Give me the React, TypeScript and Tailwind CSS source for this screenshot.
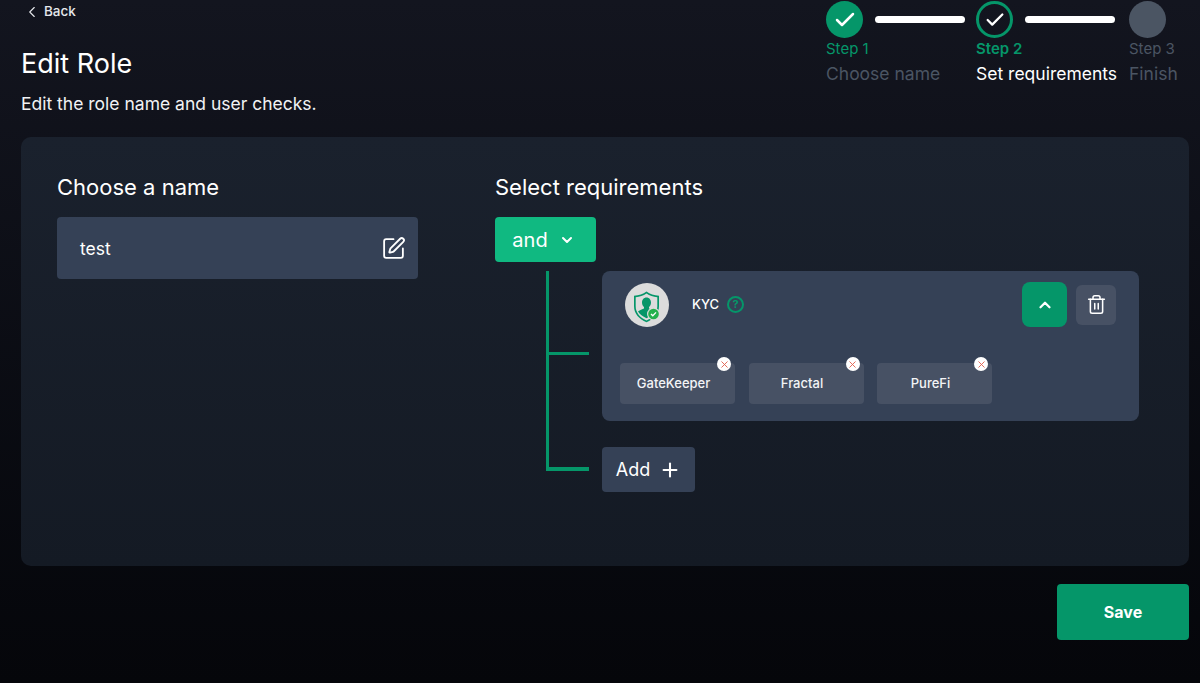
import React from 'react';
import { ChevronDown, ChevronLeft, ChevronUp, Check, Plus, SquarePen, Trash2, X } from 'lucide-react';

const steps = [
  { label: 'Step 1', name: 'Choose name', state: 'done', width: 'w-[150px]' },
  { label: 'Step 2', name: 'Set requirements', state: 'current', width: 'w-[153px]' },
  { label: 'Step 3', name: 'Finish', state: 'todo', width: 'w-[60px]' },
];

const providers = ['GateKeeper', 'Fractal', 'PureFi'];

const ShieldLogo = () => (
  <svg viewBox="0 0 44 44" className="h-[44px] w-[44px]">
    <circle cx="22" cy="22" r="22" fill="#dcdcdc" />
    <g transform="translate(-0.500 2)">
      <path d="M22 6.500c3.500 2.600 7.500 3.900 12.500 4.200v10.500c0 7.600-5.300 12.800-12.500 16-7.200-3.200-12.500-8.400-12.500-16V10.700c5-.3 9-1.600 12.500-4.200z" fill="#059669" />
      <path d="M22 8.500c3.200 2.200 6.700 3.300 10.800 3.700v9c0 6.600-4.300 11.200-10.800 14.200-6.500-3-10.800-7.600-10.800-14.200v-9c4.100-.4 7.600-1.500 10.800-3.700z" fill="#dcdcdc" />
      <path d="M22 12.500c2.700 0 4.500 2.200 4.500 5 0 2-.9 3.600-2 4.500v1.500c2.500.9 4.800 1.800 6 3-1.700 2.800-4.700 5-8.500 6.800-3.800-1.800-6.800-4-8.500-6.800 1.200-1.200 3.500-2.100 6-3V22c-1.100-.9-2-2.500-2-4.500 0-2.800 1.800-5 4.500-5z" fill="#059669" />
    </g>
    <circle cx="28.500" cy="31" r="6.500" fill="#dcdcdc" />
    <circle cx="28.500" cy="31" r="5.300" fill="#22b14c" />
    <path d="M26 31l1.800 1.800 3.200-3.400" fill="none" stroke="#fff" strokeWidth="1.300" />
  </svg>
);

const App = () => {
  return (
    <div className="flex h-[683px] w-[1200px] flex-col overflow-hidden bg-gradient-to-b from-[#13151f] to-[#05060a] font-['Inter','Noto_Sans',sans-serif] text-white">
      <header className="flex h-[137px] justify-between">
        <div className="pl-[21px]">
          <div className="flex h-[23px] items-center pl-[2px] text-[13.500px] font-medium text-[#e5e7eb]">
            <ChevronLeft className="mr-[3px] h-[18px] w-[18px]" strokeWidth={1.500} />
            Back
          </div>
          <h1 className="mt-[23px] text-[27px] leading-[36px] font-normal">Edit Role</h1>
          <p className="mt-[10px] text-[17.500px] leading-[24px] text-[#f1f2f4]">Edit the role name and user checks.</p>
        </div>
        <div className="flex pt-px pr-[11px]">
          {steps.map((step, i) => (
            <div key={step.label} className={step.width}>
              <div className="flex items-center">
                {step.state === 'done' && (
                  <div className="flex h-[37px] w-[37px] shrink-0 items-center justify-center rounded-full bg-[#059669]">
                    <Check className="h-[24px] w-[24px]" strokeWidth={2.500} />
                  </div>
                )}
                {step.state === 'current' && (
                  <div className="flex h-[37px] w-[37px] shrink-0 items-center justify-center rounded-full border-[3px] border-[#059669]">
                    <Check className="h-[22px] w-[22px]" strokeWidth={2.500} />
                  </div>
                )}
                {step.state === 'todo' && <div className="h-[37px] w-[37px] shrink-0 rounded-full bg-[#4b5563]" />}
                {i < 2 && <div className="ml-[12px] h-[7px] w-[90px] rounded-full bg-white" />}
              </div>
              <div className={`mt-[1px] text-[15px] leading-[20px] ${step.state === 'todo' ? 'text-[#4b5563]' : 'text-[#059669]'} ${step.state === 'current' ? 'font-semibold' : ''}`}>
                {step.label}
              </div>
              <div className={`mt-[3px] text-[17.500px] leading-[24px] whitespace-nowrap ${step.state === 'current' ? 'text-white' : 'text-[#4b5563]'}`}>
                {step.name}
              </div>
            </div>
          ))}
        </div>
      </header>

      <main className="mr-[11px] ml-[21px] flex h-[429px] rounded-[10px] bg-gradient-to-b from-[#1a212d] to-[#141a24] pt-[34px] pl-[36px]">
        <section className="w-[438px]">
          <h2 className="text-[22px] leading-[32px]">Choose a name</h2>
          <div className="mt-[14px] flex h-[62px] w-[361px] items-center justify-between rounded-[4px] bg-[#354156] pr-[12px] pl-[23px] text-[17.500px]">
            <span className="pt-[2px]">test</span>
            <SquarePen className="h-[25px] w-[25px]" strokeWidth={1.750} />
          </div>
        </section>

        <section>
          <h2 className="text-[22px] leading-[32px]">Select requirements</h2>
          <button className="mt-[14px] flex h-[45px] w-[101px] items-center justify-center gap-[11px] rounded-[4px] bg-[#10b981] pr-[4px] text-[20px] font-normal">
            and
            <ChevronDown className="h-[16px] w-[16px]" strokeWidth={3} />
          </button>
          <div className="mt-[9px] ml-[51px] flex">
            <div className="h-[200px] w-[43px] shrink-0 border-l-[3px] border-[#059669]">
              <div className="mt-[81px] h-[3px] bg-[#059669]" />
              <div className="mt-[112px] h-[4px] bg-[#059669]" />
            </div>
            <div className="ml-[13px]">
              <div className="h-[150px] w-[537px] rounded-[8px] bg-[#354156] pt-[11px] pr-[23px] pl-[18px]">
                <div className="ml-[5px] flex items-center">
                  <ShieldLogo />
                  <span className="ml-[23px] text-[13px] font-medium">KYC</span>
                  <span className="ml-[8px] flex h-[17px] w-[17px] items-center justify-center rounded-full border-2 border-[#059669] text-[11px] leading-none font-bold text-[#059669]">?</span>
                  <button className="ml-auto flex h-[45px] w-[45px] items-center justify-center rounded-[8px] bg-[#059669]">
                    <ChevronUp className="h-[18px] w-[18px]" strokeWidth={3} />
                  </button>
                  <button className="ml-[9px] flex h-[40px] w-[40px] items-center justify-center rounded-[6px] bg-[#475164]">
                    <Trash2 className="h-[21px] w-[21px]" strokeWidth={1.750} />
                  </button>
                </div>
                <div className="mt-[36px] flex gap-[13.500px]">
                  {providers.map((p) => (
                    <div key={p} className="relative flex h-[41px] w-[115px] items-center justify-center rounded-[4px] bg-[#475164] pr-[8px] text-[13px] font-medium text-[#f3f4f6]">
                      {p}
                      <span className="absolute -top-[6px] right-[4px] flex h-[14px] w-[14px] items-center justify-center rounded-full bg-white">
                        <X className="h-[11px] w-[11px] text-[#e0604f]" strokeWidth={2} />
                      </span>
                    </div>
                  ))}
                </div>
              </div>
              <button className="mt-[26px] flex h-[45px] w-[93px] items-center justify-center gap-[9px] rounded-[4px] bg-[#354156] text-[18px]">
                Add
                <Plus className="h-[22px] w-[22px]" strokeWidth={2.250} />
              </button>
            </div>
          </div>
        </section>
      </main>

      <div className="mt-[18px] flex justify-end pr-[11px]">
        <button className="h-[56px] w-[132px] rounded-[4px] bg-[#059669] text-[16px] font-bold">Save</button>
      </div>
    </div>
  );
};

export default App;
